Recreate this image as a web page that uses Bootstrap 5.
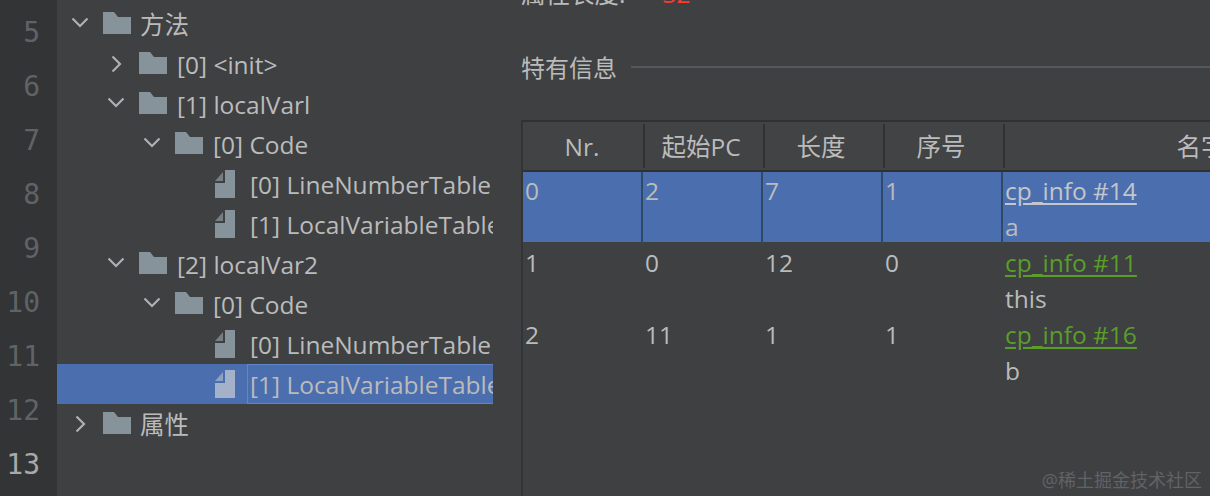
<!DOCTYPE html>
<html lang="zh">
<head>
<meta charset="utf-8">
<title>jclasslib</title>
<link href="https://cdn.jsdelivr.net/npm/bootstrap@5.3.0/dist/css/bootstrap.min.css" rel="stylesheet">
<style>
html,body{height:100%;margin:0}
body{background:#3e4042;color:#bbb;font-family:"Open Sans","Noto Sans CJK SC",sans-serif;font-size:24.5px;overflow:hidden}
.ide{width:1210px;height:496px;position:relative;overflow:hidden}
.gutter-wrap{background:#323436;width:57px;flex:none;overflow:hidden}
.gutter{color:#606366;font-family:"DejaVu Sans Mono",monospace;font-size:28px;line-height:54px;text-align:right;padding-right:17px;margin-top:6px}
.gutter .now{color:#a9a9a9}
.tree{width:436px;flex:none;overflow:hidden;padding-top:4px}
.tree-row{height:40px;white-space:nowrap;overflow:hidden}
.tree-row.picked{background:#4b6eaf}
.d0{padding-left:0}.d1{padding-left:36px}.d2{padding-left:72px}.d3{padding-left:112px}
.chev{width:46px;flex:none;display:flex;justify-content:center}
.chev svg{display:block}
.chev-down{margin-top:-4px}
.leaf-gap{width:46px;flex:none}
.ico-folder{width:28px;height:22px;flex:none;margin-right:10px;margin-top:-2px;fill:#87939a}
.ico-file{width:20px;height:28px;flex:none;margin-right:15px;fill:#87939a}
.ico-file .fold{opacity:.75}
.picked .ico-file{fill:#a3b2c8}
.label{display:inline-block;line-height:38px;padding-top:2px}
.label.han{margin-left:-1px}
.picked .label{border:1px solid #5f86c8;flex:1;height:40px;padding:1px 0 0 2px;line-height:37px;margin-left:-3px}
.panel{flex:1;min-width:0;overflow:hidden;padding-left:28px}
.attr{height:52px;margin-top:-25px;line-height:38px;white-space:nowrap;flex:none}
.attr-val{color:#ff3b30;margin-left:37px}
.sect{height:32px;margin-top:25px;flex:none;font-size:24px}
.sect-rule{height:2px;background:#55585a;flex:1;margin-left:14px;margin-top:-2px}
.grid-wrap{margin-top:36px;border-left:2px solid #323436;flex:1;min-height:0}
.grid-table{width:878px;table-layout:fixed;border-collapse:separate;border-spacing:0;margin:0;--bs-table-bg:transparent;--bs-table-color:#bbb;color:#bbb}
.col-first{width:118px}.col-mid{width:120px}.col-name{width:400px}
.grid-table th{height:52px;padding:2px 0 0;background-color:#414345;font-weight:400;text-align:center;vertical-align:middle;border:0;border-top:2px solid #2f3133;border-bottom:2px solid #2f3133;color:#bbb;background-image:linear-gradient(#2f3133,#2f3133);background-repeat:no-repeat;background-size:2px 44px;background-position:2px center}
.grid-table th:first-child{background-image:none}
.grid-table td{height:72px;padding:1px 2px 0;vertical-align:top;line-height:35.5px;border:0;border-left:2px solid transparent;color:#bbb;background:transparent;box-shadow:none}
.grid-table td:first-child{border-left:0}
.grid-table tr.on td{background:linear-gradient(#4b6eaf,#4b6eaf) no-repeat top left/100% 70px;border-left-color:#2f4a66;border-image:linear-gradient(#2f4a66 70px,transparent 70px) 1}
.grid-table a{color:#5a9e2a;text-decoration:underline;text-underline-offset:3px}
.grid-table tr.on a{color:#c3c6ca}
.wmark{position:absolute;right:8px;bottom:4px;font-size:18px;color:#616365;line-height:24px}
</style>
</head>
<body>
<div class="ide d-flex">
  <div class="gutter-wrap"><div class="gutter">5<br>6<br>7<br>8<br>9<br>10<br>11<br>12<br><span class="now">13</span></div></div>
  <div class="tree">
    <div class="tree-row d0 d-flex align-items-center"><span class="chev chev-down"><svg width="18" height="11" viewBox="0 0 18 11"><path d="M1.500 1.500 9 9 16.500 1.500" fill="none" stroke="#aeb0b2" stroke-width="2.200"/></svg></span><svg class="ico-folder" viewBox="0 0 28 22"><path d="M0 0h11l4 5h13v17H0z"/></svg><span class="label han">方法</span></div>
    <div class="tree-row d1 d-flex align-items-center"><span class="chev"><svg width="11" height="18" viewBox="0 0 11 18"><path d="M1.500 1.500 9 9 1.500 16.500" fill="none" stroke="#aeb0b2" stroke-width="2.200"/></svg></span><svg class="ico-folder" viewBox="0 0 28 22"><path d="M0 0h11l4 5h13v17H0z"/></svg><span class="label">[0] &lt;init&gt;</span></div>
    <div class="tree-row d1 d-flex align-items-center"><span class="chev chev-down"><svg width="18" height="11" viewBox="0 0 18 11"><path d="M1.500 1.500 9 9 16.500 1.500" fill="none" stroke="#aeb0b2" stroke-width="2.200"/></svg></span><svg class="ico-folder" viewBox="0 0 28 22"><path d="M0 0h11l4 5h13v17H0z"/></svg><span class="label">[1] localVarl</span></div>
    <div class="tree-row d2 d-flex align-items-center"><span class="chev chev-down"><svg width="18" height="11" viewBox="0 0 18 11"><path d="M1.500 1.500 9 9 16.500 1.500" fill="none" stroke="#aeb0b2" stroke-width="2.200"/></svg></span><svg class="ico-folder" viewBox="0 0 28 22"><path d="M0 0h11l4 5h13v17H0z"/></svg><span class="label">[0] Code</span></div>
    <div class="tree-row d3 d-flex align-items-center"><span class="leaf-gap"></span><svg class="ico-file" viewBox="0 0 20 28"><path d="M10 0h10v28H0V13h10z"/><path class="fold" d="M0 11 8 2v9z"/></svg><span class="label">[0] LineNumberTable</span></div>
    <div class="tree-row d3 d-flex align-items-center"><span class="leaf-gap"></span><svg class="ico-file" viewBox="0 0 20 28"><path d="M10 0h10v28H0V13h10z"/><path class="fold" d="M0 11 8 2v9z"/></svg><span class="label">[1] LocalVariableTable</span></div>
    <div class="tree-row d1 d-flex align-items-center"><span class="chev chev-down"><svg width="18" height="11" viewBox="0 0 18 11"><path d="M1.500 1.500 9 9 16.500 1.500" fill="none" stroke="#aeb0b2" stroke-width="2.200"/></svg></span><svg class="ico-folder" viewBox="0 0 28 22"><path d="M0 0h11l4 5h13v17H0z"/></svg><span class="label">[2] localVar2</span></div>
    <div class="tree-row d2 d-flex align-items-center"><span class="chev chev-down"><svg width="18" height="11" viewBox="0 0 18 11"><path d="M1.500 1.500 9 9 16.500 1.500" fill="none" stroke="#aeb0b2" stroke-width="2.200"/></svg></span><svg class="ico-folder" viewBox="0 0 28 22"><path d="M0 0h11l4 5h13v17H0z"/></svg><span class="label">[0] Code</span></div>
    <div class="tree-row d3 d-flex align-items-center"><span class="leaf-gap"></span><svg class="ico-file" viewBox="0 0 20 28"><path d="M10 0h10v28H0V13h10z"/><path class="fold" d="M0 11 8 2v9z"/></svg><span class="label">[0] LineNumberTable</span></div>
    <div class="tree-row picked d3 d-flex align-items-center"><span class="leaf-gap"></span><svg class="ico-file" viewBox="0 0 20 28"><path d="M10 0h10v28H0V13h10z"/><path class="fold" d="M0 11 8 2v9z"/></svg><span class="label">[1] LocalVariableTable</span></div>
    <div class="tree-row d0 d-flex align-items-center"><span class="chev"><svg width="11" height="18" viewBox="0 0 11 18"><path d="M1.500 1.500 9 9 1.500 16.500" fill="none" stroke="#aeb0b2" stroke-width="2.200"/></svg></span><svg class="ico-folder" viewBox="0 0 28 22"><path d="M0 0h11l4 5h13v17H0z"/></svg><span class="label han">属性</span></div>
  </div>
  <div class="panel d-flex flex-column">
    <div class="attr">属性长度:<span class="attr-val">32</span></div>
    <div class="sect d-flex align-items-center"><span>特有信息</span><div class="sect-rule"></div></div>
    <div class="grid-wrap">
      <table class="table grid-table">
        <colgroup><col class="col-first"><col class="col-mid"><col class="col-mid"><col class="col-mid"><col class="col-name"></colgroup>
        <thead><tr><th>Nr.</th><th>起始PC</th><th>长度</th><th>序号</th><th>名字</th></tr></thead>
        <tbody>
          <tr class="on"><td>0</td><td>2</td><td>7</td><td>1</td><td><a href="#">cp_info #14</a><br>a</td></tr>
          <tr><td>1</td><td>0</td><td>12</td><td>0</td><td><a href="#">cp_info #11</a><br>this</td></tr>
          <tr><td>2</td><td>11</td><td>1</td><td>1</td><td><a href="#">cp_info #16</a><br>b</td></tr>
        </tbody>
      </table>
    </div>
  </div>
  <div class="wmark">@稀土掘金技术社区</div>
</div>
<script src="https://cdn.jsdelivr.net/npm/bootstrap@5.3.0/dist/js/bootstrap.bundle.min.js"></script>
</body>
</html>
